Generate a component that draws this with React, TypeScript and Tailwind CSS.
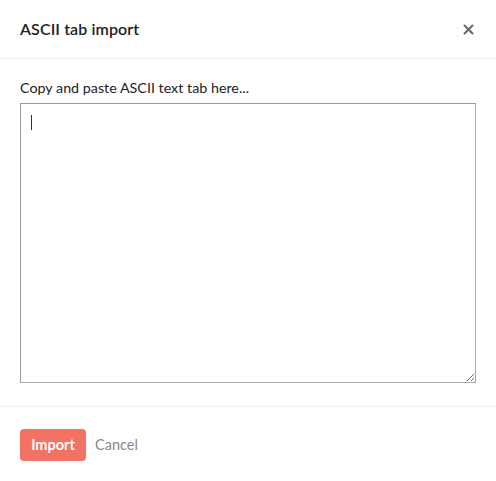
import React from "react";

export default function App() {
  return (
    <div className="w-[496px] h-[481px] bg-white flex flex-col text-[#222]" style={{ fontFamily: "Lato, 'Noto Sans', sans-serif" }}>
      <div className="h-[59px] flex items-center justify-between pl-5 pr-[20px] border-b border-[#ececec] shrink-0">
        <h2 className="text-[16px] font-semibold tracking-[0.1px] text-[#222]">ASCII tab import</h2>
        <button className="w-4 h-4 flex items-center justify-center text-[#666]">
          <svg width="11" height="11" viewBox="0 0 11 11" fill="none" stroke="currentColor" strokeWidth="2" strokeLinecap="round">
            <path d="M1.5 1.5 L9.5 9.5 M9.5 1.5 L1.5 9.5" />
          </svg>
        </button>
      </div>
      <div className="px-5 pt-[20px] pb-[23px] flex flex-col border-b border-[#ececec]">
        <label className="text-[14.3px] text-[#222] leading-[18px] mb-[6px]">Copy and paste ASCII text tab here...</label>
        <div className="relative h-[280px]">
          <textarea className="w-full h-full border border-[#aaa] border-t-[#999] border-l-[#999] outline-none resize-y px-[10px] py-[10px] text-[13px]" />
          <span className="absolute left-[11px] top-[12px] w-px h-[15px] bg-[#333] pointer-events-none" />
        </div>
      </div>
      <div className="flex items-center px-5 pt-[22px] gap-[9px]">
        <button className="h-[32px] w-[66px] rounded-[4px] bg-[#f27263] text-white font-bold text-[14.5px]">Import</button>
        <button className="text-[14.5px] text-[#888]">Cancel</button>
      </div>
    </div>
  );
}
